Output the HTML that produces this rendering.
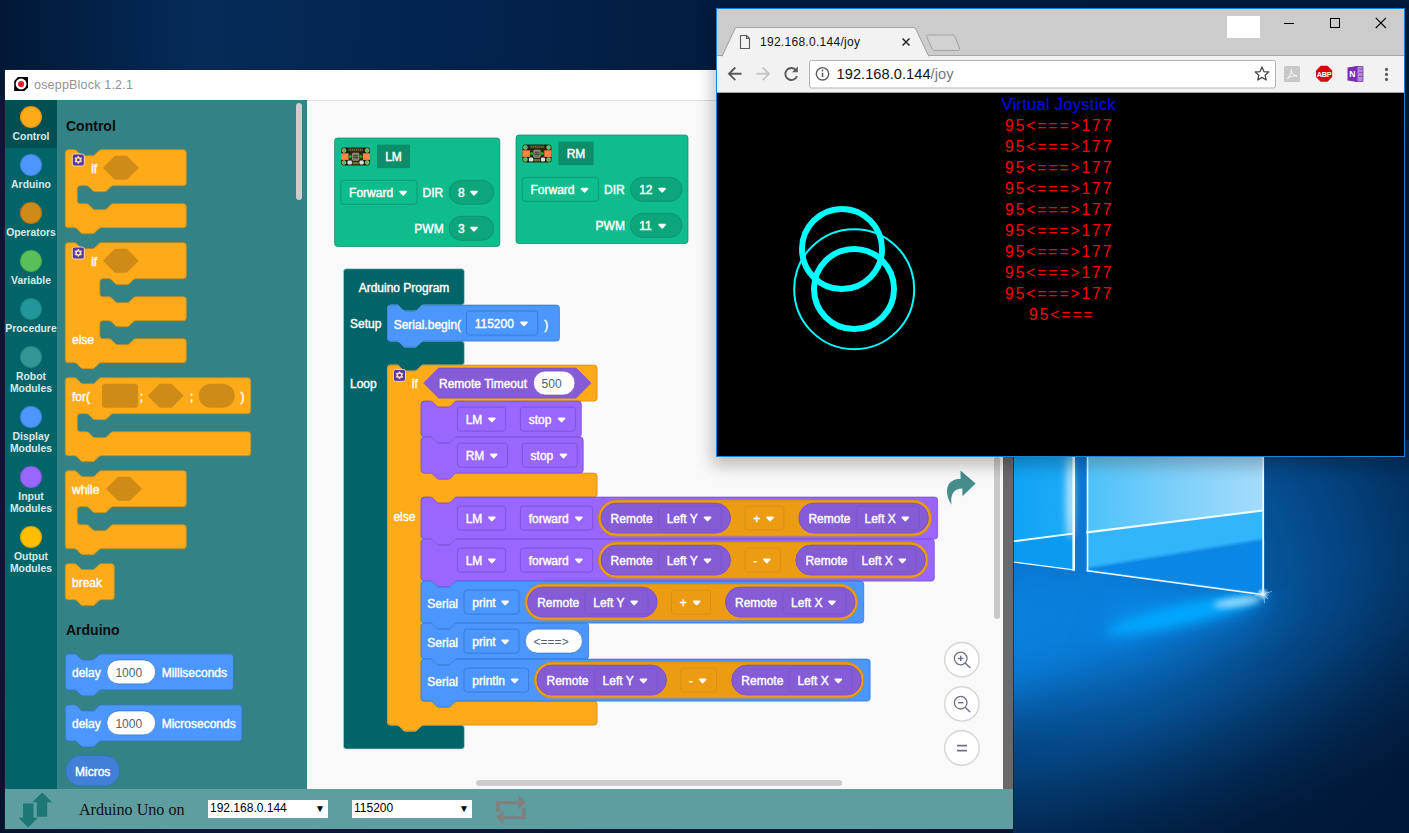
<!DOCTYPE html>
<html><head><meta charset="utf-8"><title>oseppBlock</title>
<style>
html,body{margin:0;padding:0}
body{width:1409px;height:833px;overflow:hidden;position:relative;background:#02224a;font-family:"Liberation Sans",sans-serif}
.abs{position:absolute}
#wall{position:absolute;left:0;top:0}
#osepp{position:absolute;left:5px;top:70px;width:1008px;height:759px;background:#f9f9f9;overflow:hidden;box-shadow:0 0 0 1px rgba(30,32,44,.75)}
#otitle{position:absolute;left:0;top:0;width:1008px;height:30px;background:#fff}
#otitle .t{position:absolute;left:29px;top:7.6px;font-size:12.5px;color:#929292;letter-spacing:0.2px;white-space:nowrap}
#side{position:absolute;left:0;top:30px;width:52px;height:689px;background:#006468}
#fly{position:absolute;left:52px;top:30px;width:250px;height:689px;background:#338285}
#ws{position:absolute;left:302px;top:30px;width:696px;height:689px;background:#f9f9f9;border-top:1px solid #dcdcdc;box-sizing:border-box}
#gray{position:absolute;left:998px;top:30px;width:10px;height:689px;background:#696969}
#bbar{position:absolute;left:0;top:719px;width:1008px;height:40px;background:#5f9ea0}
.cat{position:absolute;left:0;width:52px;text-align:center;color:#dde8e8;font-weight:bold;font-size:10.4px;line-height:12px;white-space:nowrap}
.cat i{display:block;width:20px;height:20px;border-radius:50%;margin:0 auto;border:1px solid rgba(0,0,0,.12)}
.sel{position:absolute;background:#fff;height:18px;font-size:12px;line-height:17px;color:#000;white-space:nowrap}
.sel span{position:absolute;left:2px;top:0}
.sel b{position:absolute;right:3px;top:0;font-weight:normal;font-size:10px}
#svgb{position:absolute;left:0;top:0}
</style></head>
<body>
<svg id="wall" width="1409" height="833" viewBox="0 0 1409 833">
<defs>
 <linearGradient id="wbase" x1="0" y1="0" x2="1" y2="0">
  <stop offset="0" stop-color="#021835"/><stop offset="0.04" stop-color="#021d42"/><stop offset="0.14" stop-color="#052b58"/><stop offset="0.3" stop-color="#032450"/><stop offset="0.5" stop-color="#021c41"/><stop offset="1" stop-color="#021a3c"/>
 </linearGradient>
 <linearGradient id="wbasev" x1="0" y1="0" x2="0" y2="1">
  <stop offset="0" stop-color="#010e26" stop-opacity="0"/><stop offset="0.8" stop-color="#010e26" stop-opacity="0.1"/><stop offset="1" stop-color="#010e26" stop-opacity="0.6"/>
 </linearGradient>
 <radialGradient id="wfloor" gradientUnits="userSpaceOnUse" cx="1120" cy="590" r="350">
  <stop offset="0" stop-color="#0a72ca"/><stop offset="0.35" stop-color="#075aa4"/><stop offset="0.65" stop-color="#044481"/><stop offset="1" stop-color="#022752"/>
 </radialGradient>
 <linearGradient id="wbot" gradientUnits="userSpaceOnUse" x1="1150" y1="630" x2="1230" y2="833">
  <stop offset="0" stop-color="#011634" stop-opacity="0"/><stop offset="0.2" stop-color="#011634" stop-opacity="0.04"/><stop offset="0.4" stop-color="#011634" stop-opacity="0.18"/><stop offset="0.6" stop-color="#011634" stop-opacity="0.42"/><stop offset="0.8" stop-color="#011634" stop-opacity="0.66"/><stop offset="1" stop-color="#011634" stop-opacity="0.85"/>
 </linearGradient>
 <linearGradient id="wdarkr" gradientUnits="userSpaceOnUse" x1="1080" y1="0" x2="1300" y2="0">
  <stop offset="0" stop-color="#032c5c" stop-opacity="0"/><stop offset="1" stop-color="#032c5c" stop-opacity="0.75"/>
 </linearGradient>
 <linearGradient id="wright" x1="0" y1="0" x2="1" y2="0.6">
  <stop offset="0" stop-color="#054e94"/><stop offset="0.4" stop-color="#04427f"/><stop offset="1" stop-color="#03305f"/>
 </linearGradient>
 <linearGradient id="wrightb" x1="0" y1="0" x2="0" y2="1">
  <stop offset="0" stop-color="#043d78" stop-opacity="0"/><stop offset="0.45" stop-color="#033468" stop-opacity="0.7"/><stop offset="1" stop-color="#021b40"/>
 </linearGradient>
 <linearGradient id="wpaneR" x1="0" y1="0" x2="1" y2="0">
  <stop offset="0" stop-color="#4cc2fa"/><stop offset="0.5" stop-color="#7ccffb"/><stop offset="1" stop-color="#a6dcfb"/>
 </linearGradient>
 <linearGradient id="wpaneRfade" x1="0" y1="0" x2="0" y2="1">
  <stop offset="0" stop-color="#cfeeff" stop-opacity="0.45"/><stop offset="0.5" stop-color="#8ad3fb" stop-opacity="0"/>
 </linearGradient>
 <linearGradient id="wpaneL" x1="0" y1="0" x2="1" y2="0">
  <stop offset="0" stop-color="#0fa3f5"/><stop offset="0.75" stop-color="#1aa9f6"/><stop offset="1" stop-color="#4dbdfa"/>
 </linearGradient>
 <radialGradient id="wbeam" cx="0.5" cy="0.5" r="0.5">
  <stop offset="0" stop-color="#00b0ff" stop-opacity="0.95"/><stop offset="0.5" stop-color="#00a0ff" stop-opacity="0.5"/><stop offset="1" stop-color="#0090ff" stop-opacity="0"/>
 </radialGradient>
 <radialGradient id="wflare" cx="0.5" cy="0.5" r="0.5">
  <stop offset="0" stop-color="#fff" stop-opacity="1"/><stop offset="0.25" stop-color="#d8f2ff" stop-opacity="0.8"/><stop offset="1" stop-color="#7fd0ff" stop-opacity="0"/>
 </radialGradient>
 <filter color-interpolation-filters="sRGB" id="wb05"><feGaussianBlur color-interpolation-filters="sRGB" stdDeviation="0.5"/></filter>
 <filter color-interpolation-filters="sRGB" id="wb07"><feGaussianBlur color-interpolation-filters="sRGB" stdDeviation="0.6"/></filter>
 <filter color-interpolation-filters="sRGB" id="wb1" x="-10%" y="-10%" width="120%" height="120%"><feGaussianBlur color-interpolation-filters="sRGB" stdDeviation="1.2"/></filter>
 <filter color-interpolation-filters="sRGB" id="wb6" filterUnits="userSpaceOnUse" x="900" y="450" width="520" height="400"><feGaussianBlur color-interpolation-filters="sRGB" stdDeviation="6"/></filter>
 <filter color-interpolation-filters="sRGB" id="wb3" filterUnits="userSpaceOnUse" x="900" y="400" width="520" height="450"><feGaussianBlur color-interpolation-filters="sRGB" stdDeviation="3"/></filter>
 <filter color-interpolation-filters="sRGB" id="wb25" filterUnits="userSpaceOnUse" x="850" y="400" width="600" height="500"><feGaussianBlur color-interpolation-filters="sRGB" stdDeviation="24"/></filter>
 <filter color-interpolation-filters="sRGB" id="wb12" filterUnits="userSpaceOnUse" x="900" y="450" width="520" height="400"><feGaussianBlur color-interpolation-filters="sRGB" stdDeviation="12"/></filter>
 <clipPath id="wbeamclip"><polygon points="1013,440 1264,440 1264,595 1409,560 1409,833 1013,833"/></clipPath>
 <clipPath id="wclip"><rect x="1013" y="440" width="396" height="393"/></clipPath>
</defs>
<rect width="1409" height="833" fill="url(#wbase)"/>
<rect width="1409" height="833" fill="url(#wbasev)"/>
<g clip-path="url(#wclip)">
 <rect x="1013" y="440" width="396" height="393" fill="url(#wfloor)"/>
 <rect x="1013" y="570" width="396" height="263" fill="url(#wbot)"/>
 <!-- beam of light on the floor -->
 <g clip-path="url(#wbeamclip)">
 <polygon points="960,540 1264,586 1264,604 960,715" fill="#0a7fdc" filter="url(#wb25)"/>
 <polygon points="1120,600 1262,592 1258,606 1090,640" fill="#0a8eee" opacity="0.6" filter="url(#wb12)"/>
 <ellipse cx="1185" cy="614" rx="80" ry="10" fill="#00aaff" transform="rotate(-13 1185 614)" filter="url(#wb6)"/>
 <ellipse cx="1237" cy="602" rx="24" ry="4.5" fill="#c8ecff" opacity="0.75" transform="rotate(-8 1237 602)" filter="url(#wb3)"/>
 </g>
 <!-- frame gap -->
 <rect x="1072" y="440" width="17" height="131" fill="#0a78d7"/>
 <!-- left pane -->
 <polygon points="1013,440 1073.7,440 1073.7,569.8 1013,562" fill="url(#wpaneL)"/>
 <polygon points="1013,541.4 1073.7,533.7 1073.7,569.8 1013,562" fill="#0a9bf0"/>
 <!-- right pane -->
 <polygon points="1087,440 1263.6,440 1263.6,594.8 1087,570.6" fill="url(#wpaneR)"/>
 <polygon points="1087,440 1263.6,440 1263.6,520 1087,520" fill="url(#wpaneRfade)"/>
 <polygon points="1087,532.3 1263.6,510.5 1263.6,540 1087,568" fill="#32b5fa"/>
 <polygon points="1087,568 1263.6,539 1263.6,594.8 1087,570.6" fill="#0a87e6" filter="url(#wb1)"/>
 <!-- bright lines -->
 <g stroke="#f0faff" fill="none" filter="url(#wb07)" stroke-linecap="round">
  <path d="M1087,532.3 L1263,510.5" stroke-width="2.2"/>
  <path d="M1013,541.4 L1073,533.7" stroke-width="1.8"/>
  <path d="M1087,570.8 L1263.6,594.8" stroke-width="1.6"/>
  <path d="M1013,562 L1073.7,569.8" stroke-width="1.2"/>
  <path d="M1073.7,440 V569.8" stroke-width="2.6"/>
  <path d="M1087.5,440 V570.6" stroke-width="1.6"/>
  <path d="M1263.2,440 V594.8" stroke-width="1.8"/>
 </g>
 <ellipse cx="1070.5" cy="498" rx="4" ry="42" fill="#fff" opacity="0.6" filter="url(#wb3)"/>
 <circle cx="1263" cy="594" r="7" fill="url(#wflare)"/>
 <path d="M1255,596 L1272,591.5 M1263,587 L1264.5,603 M1258.5,590 L1268,599" stroke="#cfeeff" stroke-width="0.8" opacity="0.7" filter="url(#wb05)"/>
</g>
</svg>
<div id="osepp">
 <div id="otitle">
  <svg class="abs" style="left:9px;top:7px" width="15" height="15" viewBox="0 0 15 15"><path d="M0.2 4 L4 0 H14 V10.5 L10.5 14 H0.2Z" fill="#000"/><circle cx="7.1" cy="7" r="5.4" fill="#fff"/><circle cx="7.1" cy="7" r="3.1" fill="#ec1c24"/></svg>
  <div class="t">oseppBlock 1.2.1</div>
 </div>
 <div id="side"><div class="abs" style="left:0;top:0;width:52px;height:48px;background:#005053"></div>
<div class="cat" style="top:6px"><i style="background:#FFAB19"></i><div style="margin-top:3px">Control</div></div>
<div class="cat" style="top:54px"><i style="background:#4C97FF"></i><div style="margin-top:3px">Arduino</div></div>
<div class="cat" style="top:102px"><i style="background:#CF8B17"></i><div style="margin-top:3px">Operators</div></div>
<div class="cat" style="top:150px"><i style="background:#59C059"></i><div style="margin-top:3px">Variable</div></div>
<div class="cat" style="top:198px"><i style="background:#21969B"></i><div style="margin-top:3px">Procedure</div></div>
<div class="cat" style="top:246px"><i style="background:#339696"></i><div style="margin-top:3px">Robot<br>Modules</div></div>
<div class="cat" style="top:306px"><i style="background:#4C97FF"></i><div style="margin-top:3px">Display<br>Modules</div></div>
<div class="cat" style="top:366px"><i style="background:#9966FF"></i><div style="margin-top:3px">Input<br>Modules</div></div>
<div class="cat" style="top:426px"><i style="background:#FFBF00"></i><div style="margin-top:3px">Output<br>Modules</div></div></div>
 <div id="fly"></div>
 <div id="ws"></div>
 <div id="gray"></div>
 <div id="bbar">
  <svg class="abs" style="left:12px;top:2px" width="40" height="38" viewBox="0 0 40 38"><path d="M25.2 1.4 L35.2 11.3 H30.2 V25.7 H19.8 V11.3 H15.3Z" fill="#1c7775"/><path d="M6 12.5 H16.5 V26.7 H20.8 L11.2 36.6 L1.6 26.7 H6Z" fill="#1c7775"/></svg>
  <div class="abs" style="left:74px;top:10.5px;font-family:'Liberation Serif',serif;font-size:16.1px;line-height:20px;color:#111;white-space:nowrap">Arduino Uno on</div>
  <div class="sel" style="left:203px;top:11px;width:120px"><span>192.168.0.144</span><b>&#9660;</b></div>
  <div class="sel" style="left:347px;top:11px;width:120px"><span>115200</span><b>&#9660;</b></div>
  <svg class="abs" style="left:490px;top:6px" width="32" height="31" viewBox="0 0 32 31"><path d="M1.1,16.9 V6.1 H23.5 V0 L30.8,7.4 L23.5,14.7 V9.4 H4.8 V16.9Z" fill="#808080"/><path d="M30.8,13.2 V24.2 H8.5 V29.7 L1.1,22.5 L8.5,15.2 V21.2 H27.2 V13.2Z" fill="#808080"/></svg>
 </div>
 <svg id="svgb" width="1008" height="759" viewBox="5 70 1008 759" font-family="'Liberation Sans',sans-serif" font-size="12" fill="#fff"><style>.t{stroke:#fff;stroke-width:.4px}</style><rect x="296" y="103" width="6" height="97" rx="3" fill="#cdcdcd"/>
<rect x="476" y="780" width="366" height="6" rx="3" fill="#cdcdcd"/>
<rect x="994" y="457" width="6" height="162" rx="3" fill="#c9c9c9"/>
<path d="M960.5,470.6 L975.6,483.5 L962.5,496.2 L962.3,488.6 C955,488.5 950,493 951.5,504.8 C945.5,496 945,484 953,480.5 C955.5,479.3 958,478.9 960.6,479Z" fill="#458c8c"/>
<circle cx="961.9" cy="659.7" r="17.2" fill="#fff" stroke="#d6d6d6" stroke-width="1.4"/>
<circle cx="960.7" cy="658.5" r="6.3" fill="none" stroke="#6b7189" stroke-width="1.3"/>
<path d="M965.4,663.2 L969.8,667.6" stroke="#6b7189" stroke-width="1.4" stroke-linecap="round"/>
<path d="M958,658.5 H963.4" stroke="#6b7189" stroke-width="1.4"/>
<path d="M960.7,655.8000000000001 V661.2" stroke="#6b7189" stroke-width="1.4"/>
<circle cx="961.9" cy="703.9" r="17.2" fill="#fff" stroke="#d6d6d6" stroke-width="1.4"/>
<circle cx="960.7" cy="702.6999999999999" r="6.3" fill="none" stroke="#6b7189" stroke-width="1.3"/>
<path d="M965.4,707.4 L969.8,711.8" stroke="#6b7189" stroke-width="1.4" stroke-linecap="round"/>
<path d="M958,702.6999999999999 H963.4" stroke="#6b7189" stroke-width="1.4"/>
<circle cx="961.9" cy="748" r="17.2" fill="#fff" stroke="#d6d6d6" stroke-width="1.4"/>
<path d="M957,745.7 H967 M957,750.7 H967" stroke="#6b7189" stroke-width="1.7"/>
<path d="M65.3,152.7a3.0,3.0 0 0 1 3.0,-3.0H74.3c1.5,0 2.25,.75 3,1.5l3,3c.75,.75 1.5,1.5 3,1.5h9c1.5,0 2.25,-.75 3,-1.5l3,-3c.75,-.75 1.5,-1.5 3,-1.5H183.3a3.0,3.0 0 0 1 3.0,3.0V182.7a3.0,3.0 0 0 1 -3.0,3.0H113.3c-1.5,0 -2.25,.75 -3,1.5l-3,3c-.75,.75 -1.5,1.5 -3,1.5h-9c-1.5,0 -2.25,-.75 -3,-1.5l-3,-3c-.75,-.75 -1.5,-1.5 -3,-1.5H80.3a3.0,3.0 0 0 0 -3.0,3.0V200.7a3.0,3.0 0 0 0 3.0,3.0H86.3c1.5,0 2.25,.75 3,1.5l3,3c.75,.75 1.5,1.5 3,1.5h9c1.5,0 2.25,-.75 3,-1.5l3,-3c.75,-.75 1.5,-1.5 3,-1.5H183.3a3.0,3.0 0 0 1 3.0,3.0V224.7a3.0,3.0 0 0 1 -3.0,3.0H101.3c-1.5,0 -2.25,.75 -3,1.5l-3,3c-.75,.75 -1.5,1.5 -3,1.5h-9c-1.5,0 -2.25,-.75 -3,-1.5l-3,-3c-.75,-.75 -1.5,-1.5 -3,-1.5H68.3a3.0,3.0 0 0 1 -3.0,-3.0z" fill="#FFAB19" stroke="#CF8B17" stroke-width="0.75"/>
<g transform="translate(72.3,154)"><rect x="0" y="0" width="12" height="12" rx="2.2" fill="#5a37a8" stroke="#fbe2ad" stroke-width="0.9"/><path d="M6.00,2.00 L7.28,3.69 L9.38,3.95 L8.55,5.90 L9.38,7.85 L7.28,8.11 L6.00,9.80 L4.73,8.11 L2.62,7.85 L3.45,5.90 L2.62,3.95 L4.72,3.69Z" fill="#fbe7a6" stroke="#fbe7a6" stroke-width="0.5" stroke-linejoin="round"/><circle cx="6" cy="5.9" r="1.45" fill="#5a37a8"/></g>
<text x="91.2" y="172.85" class="t">if</text>
<path d="M114.8,155.7H126.8l12,12l-12,12H114.8l-12,-12z" fill="#CF8B17"/>
<path d="M65.3,245.7a3.0,3.0 0 0 1 3.0,-3.0H74.3c1.5,0 2.25,.75 3,1.5l3,3c.75,.75 1.5,1.5 3,1.5h9c1.5,0 2.25,-.75 3,-1.5l3,-3c.75,-.75 1.5,-1.5 3,-1.5H183.3a3.0,3.0 0 0 1 3.0,3.0V275.7a3.0,3.0 0 0 1 -3.0,3.0H135.9c-1.5,0 -2.25,.75 -3,1.5l-3,3c-.75,.75 -1.5,1.5 -3,1.5h-9c-1.5,0 -2.25,-.75 -3,-1.5l-3,-3c-.75,-.75 -1.5,-1.5 -3,-1.5H102.9a3.0,3.0 0 0 0 -3.0,3.0V293.7a3.0,3.0 0 0 0 3.0,3.0H108.9c1.5,0 2.25,.75 3,1.5l3,3c.75,.75 1.5,1.5 3,1.5h9c1.5,0 2.25,-.75 3,-1.5l3,-3c.75,-.75 1.5,-1.5 3,-1.5H183.3a3.0,3.0 0 0 1 3.0,3.0V317.7a3.0,3.0 0 0 1 -3.0,3.0H135.9c-1.5,0 -2.25,.75 -3,1.5l-3,3c-.75,.75 -1.5,1.5 -3,1.5h-9c-1.5,0 -2.25,-.75 -3,-1.5l-3,-3c-.75,-.75 -1.5,-1.5 -3,-1.5H102.9a3.0,3.0 0 0 0 -3.0,3.0V335.7a3.0,3.0 0 0 0 3.0,3.0H108.9c1.5,0 2.25,.75 3,1.5l3,3c.75,.75 1.5,1.5 3,1.5h9c1.5,0 2.25,-.75 3,-1.5l3,-3c.75,-.75 1.5,-1.5 3,-1.5H183.3a3.0,3.0 0 0 1 3.0,3.0V359.7a3.0,3.0 0 0 1 -3.0,3.0H101.3c-1.5,0 -2.25,.75 -3,1.5l-3,3c-.75,.75 -1.5,1.5 -3,1.5h-9c-1.5,0 -2.25,-.75 -3,-1.5l-3,-3c-.75,-.75 -1.5,-1.5 -3,-1.5H68.3a3.0,3.0 0 0 1 -3.0,-3.0z" fill="#FFAB19" stroke="#CF8B17" stroke-width="0.75"/>
<g transform="translate(72.3,247)"><rect x="0" y="0" width="12" height="12" rx="2.2" fill="#5a37a8" stroke="#fbe2ad" stroke-width="0.9"/><path d="M6.00,2.00 L7.28,3.69 L9.38,3.95 L8.55,5.90 L9.38,7.85 L7.28,8.11 L6.00,9.80 L4.73,8.11 L2.62,7.85 L3.45,5.90 L2.62,3.95 L4.72,3.69Z" fill="#fbe7a6" stroke="#fbe7a6" stroke-width="0.5" stroke-linejoin="round"/><circle cx="6" cy="5.9" r="1.45" fill="#5a37a8"/></g>
<text x="91.2" y="265.85" class="t">if</text>
<path d="M114.8,248.7H126.8l12,12l-12,12H114.8l-12,-12z" fill="#CF8B17"/>
<text x="72" y="344.1" class="t">else</text>
<path d="M65.3,380.7a3.0,3.0 0 0 1 3.0,-3.0H74.3c1.5,0 2.25,.75 3,1.5l3,3c.75,.75 1.5,1.5 3,1.5h9c1.5,0 2.25,-.75 3,-1.5l3,-3c.75,-.75 1.5,-1.5 3,-1.5H247.7a3.0,3.0 0 0 1 3.0,3.0V410.7a3.0,3.0 0 0 1 -3.0,3.0H113.3c-1.5,0 -2.25,.75 -3,1.5l-3,3c-.75,.75 -1.5,1.5 -3,1.5h-9c-1.5,0 -2.25,-.75 -3,-1.5l-3,-3c-.75,-.75 -1.5,-1.5 -3,-1.5H80.3a3.0,3.0 0 0 0 -3.0,3.0V428.7a3.0,3.0 0 0 0 3.0,3.0H86.3c1.5,0 2.25,.75 3,1.5l3,3c.75,.75 1.5,1.5 3,1.5h9c1.5,0 2.25,-.75 3,-1.5l3,-3c.75,-.75 1.5,-1.5 3,-1.5H247.7a3.0,3.0 0 0 1 3.0,3.0V452.7a3.0,3.0 0 0 1 -3.0,3.0H101.3c-1.5,0 -2.25,.75 -3,1.5l-3,3c-.75,.75 -1.5,1.5 -3,1.5h-9c-1.5,0 -2.25,-.75 -3,-1.5l-3,-3c-.75,-.75 -1.5,-1.5 -3,-1.5H68.3a3.0,3.0 0 0 1 -3.0,-3.0z" fill="#FFAB19" stroke="#CF8B17" stroke-width="0.75"/>
<text x="72" y="400.85" class="t">for(</text>
<rect x="102" y="383.7" width="36" height="24" rx="3" fill="#CF8B17"/>
<text x="139.8" y="400.85" class="t">;</text>
<path d="M159.6,383.7H171.6l12,12l-12,12H159.6l-12,-12z" fill="#CF8B17"/>
<text x="190" y="400.85" class="t">;</text>
<path d="M210.7,383.7H222.7a12,12 0 0 1 0,24H210.7a12,12 0 0 1 0,-24z" fill="#CF8B17"/>
<text x="240.6" y="400.85" class="t">)</text>
<path d="M65.3,473.7a3.0,3.0 0 0 1 3.0,-3.0H74.3c1.5,0 2.25,.75 3,1.5l3,3c.75,.75 1.5,1.5 3,1.5h9c1.5,0 2.25,-.75 3,-1.5l3,-3c.75,-.75 1.5,-1.5 3,-1.5H183.3a3.0,3.0 0 0 1 3.0,3.0V503.7a3.0,3.0 0 0 1 -3.0,3.0H113.3c-1.5,0 -2.25,.75 -3,1.5l-3,3c-.75,.75 -1.5,1.5 -3,1.5h-9c-1.5,0 -2.25,-.75 -3,-1.5l-3,-3c-.75,-.75 -1.5,-1.5 -3,-1.5H80.3a3.0,3.0 0 0 0 -3.0,3.0V521.7a3.0,3.0 0 0 0 3.0,3.0H86.3c1.5,0 2.25,.75 3,1.5l3,3c.75,.75 1.5,1.5 3,1.5h9c1.5,0 2.25,-.75 3,-1.5l3,-3c.75,-.75 1.5,-1.5 3,-1.5H183.3a3.0,3.0 0 0 1 3.0,3.0V545.7a3.0,3.0 0 0 1 -3.0,3.0H101.3c-1.5,0 -2.25,.75 -3,1.5l-3,3c-.75,.75 -1.5,1.5 -3,1.5h-9c-1.5,0 -2.25,-.75 -3,-1.5l-3,-3c-.75,-.75 -1.5,-1.5 -3,-1.5H68.3a3.0,3.0 0 0 1 -3.0,-3.0z" fill="#FFAB19" stroke="#CF8B17" stroke-width="0.75"/>
<text x="72" y="493.85" class="t">while</text>
<path d="M118,476.7H130l12,12l-12,12H118l-12,-12z" fill="#CF8B17"/>
<path d="M65.3,566.7a3.0,3.0 0 0 1 3.0,-3.0H74.3c1.5,0 2.25,.75 3,1.5l3,3c.75,.75 1.5,1.5 3,1.5h9c1.5,0 2.25,-.75 3,-1.5l3,-3c.75,-.75 1.5,-1.5 3,-1.5H111.3a3.0,3.0 0 0 1 3.0,3.0V596.7a3.0,3.0 0 0 1 -3.0,3.0H101.3c-1.5,0 -2.25,.75 -3,1.5l-3,3c-.75,.75 -1.5,1.5 -3,1.5h-9c-1.5,0 -2.25,-.75 -3,-1.5l-3,-3c-.75,-.75 -1.5,-1.5 -3,-1.5H68.3a3.0,3.0 0 0 1 -3.0,-3.0z" fill="#FFAB19" stroke="#CF8B17" stroke-width="0.75"/>
<text x="72" y="586.85" class="t">break</text>
<text x="66" y="131.31" font-weight="bold" font-size="14" fill="#0e0e0e">Control</text>
<text x="66" y="634.91" font-weight="bold" font-size="14" fill="#0e0e0e">Arduino</text>
<path d="M65.3,656.9a3.0,3.0 0 0 1 3.0,-3.0H74.3c1.5,0 2.25,.75 3,1.5l3,3c.75,.75 1.5,1.5 3,1.5h9c1.5,0 2.25,-.75 3,-1.5l3,-3c.75,-.75 1.5,-1.5 3,-1.5H230.3a3.0,3.0 0 0 1 3.0,3.0V686.9a3.0,3.0 0 0 1 -3.0,3.0H101.3c-1.5,0 -2.25,.75 -3,1.5l-3,3c-.75,.75 -1.5,1.5 -3,1.5h-9c-1.5,0 -2.25,-.75 -3,-1.5l-3,-3c-.75,-.75 -1.5,-1.5 -3,-1.5H68.3a3.0,3.0 0 0 1 -3.0,-3.0z" fill="#4C97FF" stroke="#3373CC" stroke-width="0.75"/>
<text x="72" y="677.05" class="t">delay</text>
<path d="M118.8,659.9H143.6a12,12 0 0 1 0,24H118.8a12,12 0 0 1 0,-24z" fill="#fff" stroke="#3373CC" stroke-width="0.75"/>
<text x="115.4" y="676.8" fill="#575e75">1000</text>
<text x="161.7" y="677.05" class="t">Milliseconds</text>
<path d="M65.3,707.9a3.0,3.0 0 0 1 3.0,-3.0H74.3c1.5,0 2.25,.75 3,1.5l3,3c.75,.75 1.5,1.5 3,1.5h9c1.5,0 2.25,-.75 3,-1.5l3,-3c.75,-.75 1.5,-1.5 3,-1.5H239a3.0,3.0 0 0 1 3.0,3.0V737.9a3.0,3.0 0 0 1 -3.0,3.0H101.3c-1.5,0 -2.25,.75 -3,1.5l-3,3c-.75,.75 -1.5,1.5 -3,1.5h-9c-1.5,0 -2.25,-.75 -3,-1.5l-3,-3c-.75,-.75 -1.5,-1.5 -3,-1.5H68.3a3.0,3.0 0 0 1 -3.0,-3.0z" fill="#4C97FF" stroke="#3373CC" stroke-width="0.75"/>
<text x="72" y="728.05" class="t">delay</text>
<path d="M118.8,710.9H143.6a12,12 0 0 1 0,24H118.8a12,12 0 0 1 0,-24z" fill="#fff" stroke="#3373CC" stroke-width="0.75"/>
<text x="115.4" y="727.8" fill="#575e75">1000</text>
<text x="161.7" y="728.05" class="t">Microseconds</text>
<path d="M80.8,755.7H104.6a15,15 0 0 1 0,30H80.8a15,15 0 0 1 0,-30z" fill="#4280D7" stroke="#3373CC" stroke-width="0.75"/>
<text x="75" y="775.5" class="t">Micros</text>
<rect x="334.6" y="138" width="165.2" height="108.5" rx="3" fill="#0FBD8C" stroke="#0B8E69" stroke-width="0.75"/>
<g transform="translate(340.9,147.2)"><rect x="0.2" y="0.3" width="29" height="18" rx="3" fill="#1c1c12"/><rect x="0.2" y="6.1" width="29" height="6.6" fill="#ff8540"/><rect x="7.6" y="5.6" width="14.4" height="7.8" fill="#2a2a1e"/><rect x="7.5" y="1.4" width="14.5" height="2.6" fill="#8f7a3c" opacity="0.85"/><path d="M8.5,1.4 V4 M10.5,1.4 V4 M12.5,1.4 V4 M14.5,1.4 V4 M16.5,1.4 V4 M18.5,1.4 V4 M20.5,1.4 V4" stroke="#1c1c12" stroke-width="0.7"/><rect x="11.5" y="5.9" width="6.4" height="7.2" rx="0.6" fill="#74746c" stroke="#c9b878" stroke-width="0.6"/><path d="M12.4,8.6 H17 M12.4,10.4 H17" stroke="#33332c" stroke-width="0.8"/><circle cx="9.3" cy="9.3" r="1.55" fill="#10b414"/><circle cx="20" cy="9.3" r="1.55" fill="#10b414"/><rect x="6.6" y="13.2" width="4.4" height="4.2" rx="1.4" fill="#dcdcdc"/><rect x="18.6" y="13.2" width="4.2" height="4.2" rx="1.4" fill="#dcdcdc"/><rect x="11.6" y="14.6" width="6.2" height="2.6" fill="#8f7a3c" opacity="0.8"/><circle cx="3.1" cy="3.3" r="1.9" fill="#22c486" stroke="#d2b63c" stroke-width="0.8"/><circle cx="26.3" cy="3.3" r="1.9" fill="#22c486" stroke="#d2b63c" stroke-width="0.8"/><circle cx="3.1" cy="15.3" r="1.9" fill="#22c486" stroke="#d2b63c" stroke-width="0.8"/><circle cx="26.3" cy="15.3" r="1.9" fill="#22c486" stroke="#d2b63c" stroke-width="0.8"/></g>
<rect x="377" y="144.6" width="33" height="23.5" fill="#0B8E69"/>
<text x="393.5" y="160.9" class="t" text-anchor="middle">LM</text>
<rect x="340.8" y="180.3" width="76.2" height="24" rx="3" fill="#0FBD8C" stroke="#0B8E69" stroke-width="0.75"/>
<text x="349.1" y="197.3" class="t">Forward</text>
<path transform="translate(399.3,190.8) scale(.92)" d="M1,0 H7.4 C8.3,0 8.7,.9 8.1,1.6 L5,4.9 C4.6,5.4 3.8,5.4 3.4,4.9 L.3,1.6 C-.3,.9 .1,0 1,0z" fill="#fff"/>
<text x="422.6" y="196.9" class="t">DIR</text>
<path d="M461.2,180.3H481.8a12,12 0 0 1 0,24H461.2a12,12 0 0 1 0,-24z" fill="#0DA57A" stroke="#0B8E69" stroke-width="0.75"/>
<text x="458" y="197.3" class="t">8</text>
<path transform="translate(470.1,190.8) scale(.92)" d="M1,0 H7.4 C8.3,0 8.7,.9 8.1,1.6 L5,4.9 C4.6,5.4 3.8,5.4 3.4,4.9 L.3,1.6 C-.3,.9 .1,0 1,0z" fill="#fff"/>
<text x="443.7" y="232.9" class="t" text-anchor="end">PWM</text>
<path d="M461.2,216.3H481.8a12,12 0 0 1 0,24H461.2a12,12 0 0 1 0,-24z" fill="#0DA57A" stroke="#0B8E69" stroke-width="0.75"/>
<text x="458" y="233.3" class="t">3</text>
<path transform="translate(470.1,226.8) scale(.92)" d="M1,0 H7.4 C8.3,0 8.7,.9 8.1,1.6 L5,4.9 C4.6,5.4 3.8,5.4 3.4,4.9 L.3,1.6 C-.3,.9 .1,0 1,0z" fill="#fff"/>
<rect x="516" y="135" width="172" height="108.5" rx="3" fill="#0FBD8C" stroke="#0B8E69" stroke-width="0.75"/>
<g transform="translate(522.3,144.2)"><rect x="0.2" y="0.3" width="29" height="18" rx="3" fill="#1c1c12"/><rect x="0.2" y="6.1" width="29" height="6.6" fill="#ff8540"/><rect x="7.6" y="5.6" width="14.4" height="7.8" fill="#2a2a1e"/><rect x="7.5" y="1.4" width="14.5" height="2.6" fill="#8f7a3c" opacity="0.85"/><path d="M8.5,1.4 V4 M10.5,1.4 V4 M12.5,1.4 V4 M14.5,1.4 V4 M16.5,1.4 V4 M18.5,1.4 V4 M20.5,1.4 V4" stroke="#1c1c12" stroke-width="0.7"/><rect x="11.5" y="5.9" width="6.4" height="7.2" rx="0.6" fill="#74746c" stroke="#c9b878" stroke-width="0.6"/><path d="M12.4,8.6 H17 M12.4,10.4 H17" stroke="#33332c" stroke-width="0.8"/><circle cx="9.3" cy="9.3" r="1.55" fill="#10b414"/><circle cx="20" cy="9.3" r="1.55" fill="#10b414"/><rect x="6.6" y="13.2" width="4.4" height="4.2" rx="1.4" fill="#dcdcdc"/><rect x="18.6" y="13.2" width="4.2" height="4.2" rx="1.4" fill="#dcdcdc"/><rect x="11.6" y="14.6" width="6.2" height="2.6" fill="#8f7a3c" opacity="0.8"/><circle cx="3.1" cy="3.3" r="1.9" fill="#22c486" stroke="#d2b63c" stroke-width="0.8"/><circle cx="26.3" cy="3.3" r="1.9" fill="#22c486" stroke="#d2b63c" stroke-width="0.8"/><circle cx="3.1" cy="15.3" r="1.9" fill="#22c486" stroke="#d2b63c" stroke-width="0.8"/><circle cx="26.3" cy="15.3" r="1.9" fill="#22c486" stroke="#d2b63c" stroke-width="0.8"/></g>
<rect x="558.4" y="141.6" width="35.2" height="23.5" fill="#0B8E69"/>
<text x="576" y="157.9" class="t" text-anchor="middle">RM</text>
<rect x="522.2" y="177.3" width="76.2" height="24" rx="3" fill="#0FBD8C" stroke="#0B8E69" stroke-width="0.75"/>
<text x="530.5" y="194.3" class="t">Forward</text>
<path transform="translate(580.7,187.8) scale(.92)" d="M1,0 H7.4 C8.3,0 8.7,.9 8.1,1.6 L5,4.9 C4.6,5.4 3.8,5.4 3.4,4.9 L.3,1.6 C-.3,.9 .1,0 1,0z" fill="#fff"/>
<text x="604" y="193.9" class="t">DIR</text>
<path d="M642.4,177.3H670a12,12 0 0 1 0,24H642.4a12,12 0 0 1 0,-24z" fill="#0DA57A" stroke="#0B8E69" stroke-width="0.75"/>
<text x="639.2" y="194.3" class="t">12</text>
<path transform="translate(658.3,187.8) scale(.92)" d="M1,0 H7.4 C8.3,0 8.7,.9 8.1,1.6 L5,4.9 C4.6,5.4 3.8,5.4 3.4,4.9 L.3,1.6 C-.3,.9 .1,0 1,0z" fill="#fff"/>
<text x="624.9" y="229.9" class="t" text-anchor="end">PWM</text>
<path d="M642.4,213.3H670a12,12 0 0 1 0,24H642.4a12,12 0 0 1 0,-24z" fill="#0DA57A" stroke="#0B8E69" stroke-width="0.75"/>
<text x="639.2" y="230.3" class="t">11</text>
<path transform="translate(658.3,223.8) scale(.92)" d="M1,0 H7.4 C8.3,0 8.7,.9 8.1,1.6 L5,4.9 C4.6,5.4 3.8,5.4 3.4,4.9 L.3,1.6 C-.3,.9 .1,0 1,0z" fill="#fff"/>
<path d="M343.4,271.7a3.0,3.0 0 0 1 3.0,-3.0H461.4a3.0,3.0 0 0 1 3.0,3.0V302.1a3.0,3.0 0 0 1 -3.0,3.0H423.6c-1.5,0 -2.25,.75 -3,1.5l-3,3c-.75,.75 -1.5,1.5 -3,1.5h-9c-1.5,0 -2.25,-.75 -3,-1.5l-3,-3c-.75,-.75 -1.5,-1.5 -3,-1.5H390.6a3.0,3.0 0 0 0 -3.0,3.0V338.1a3.0,3.0 0 0 0 3.0,3.0H396.6c1.5,0 2.25,.75 3,1.5l3,3c.75,.75 1.5,1.5 3,1.5h9c1.5,0 2.25,-.75 3,-1.5l3,-3c.75,-.75 1.5,-1.5 3,-1.5H461.4a3.0,3.0 0 0 1 3.0,3.0V362.1a3.0,3.0 0 0 1 -3.0,3.0H423.6c-1.5,0 -2.25,.75 -3,1.5l-3,3c-.75,.75 -1.5,1.5 -3,1.5h-9c-1.5,0 -2.25,-.75 -3,-1.5l-3,-3c-.75,-.75 -1.5,-1.5 -3,-1.5H390.6a3.0,3.0 0 0 0 -3.0,3.0V722.1a3.0,3.0 0 0 0 3.0,3.0H396.6c1.5,0 2.25,.75 3,1.5l3,3c.75,.75 1.5,1.5 3,1.5h9c1.5,0 2.25,-.75 3,-1.5l3,-3c.75,-.75 1.5,-1.5 3,-1.5H461.4a3.0,3.0 0 0 1 3.0,3.0V746.1a3.0,3.0 0 0 1 -3.0,3.0H346.4a3.0,3.0 0 0 1 -3.0,-3.0z" fill="#006468" stroke="#b9dcdc" stroke-width="0.75"/>
<text x="404" y="291.5" class="t" text-anchor="middle">Arduino Program</text>
<text x="350" y="328.3" class="t">Setup</text>
<text x="350" y="388.3" class="t">Loop</text>
<path d="M387.6,308.1a3.0,3.0 0 0 1 3.0,-3.0H396.6c1.5,0 2.25,.75 3,1.5l3,3c.75,.75 1.5,1.5 3,1.5h9c1.5,0 2.25,-.75 3,-1.5l3,-3c.75,-.75 1.5,-1.5 3,-1.5H556.4a3.0,3.0 0 0 1 3.0,3.0V338.1a3.0,3.0 0 0 1 -3.0,3.0H423.6c-1.5,0 -2.25,.75 -3,1.5l-3,3c-.75,.75 -1.5,1.5 -3,1.5h-9c-1.5,0 -2.25,-.75 -3,-1.5l-3,-3c-.75,-.75 -1.5,-1.5 -3,-1.5H390.6a3.0,3.0 0 0 1 -3.0,-3.0z" fill="#4C97FF" stroke="#3373CC" stroke-width="0.75"/>
<text x="393.7" y="328.7" class="t">Serial.begin(</text>
<rect x="466.4" y="311.1" width="71.4" height="24" rx="3" fill="#4C97FF" stroke="#3373CC" stroke-width="0.75"/>
<text x="474.7" y="328.1" class="t">115200</text>
<path transform="translate(520.1,321.6) scale(.92)" d="M1,0 H7.4 C8.3,0 8.7,.9 8.1,1.6 L5,4.9 C4.6,5.4 3.8,5.4 3.4,4.9 L.3,1.6 C-.3,.9 .1,0 1,0z" fill="#fff"/>
<text x="544.2" y="328.7" class="t">)</text>
<path d="M387.6,368.1a3.0,3.0 0 0 1 3.0,-3.0H396.6c1.5,0 2.25,.75 3,1.5l3,3c.75,.75 1.5,1.5 3,1.5h9c1.5,0 2.25,-.75 3,-1.5l3,-3c.75,-.75 1.5,-1.5 3,-1.5H594.1a3.0,3.0 0 0 1 3.0,3.0V398.1a3.0,3.0 0 0 1 -3.0,3.0H457.1c-1.5,0 -2.25,.75 -3,1.5l-3,3c-.75,.75 -1.5,1.5 -3,1.5h-9c-1.5,0 -2.25,-.75 -3,-1.5l-3,-3c-.75,-.75 -1.5,-1.5 -3,-1.5H424.1a3.0,3.0 0 0 0 -3.0,3.0V470.1a3.0,3.0 0 0 0 3.0,3.0H430.1c1.5,0 2.25,.75 3,1.5l3,3c.75,.75 1.5,1.5 3,1.5h9c1.5,0 2.25,-.75 3,-1.5l3,-3c.75,-.75 1.5,-1.5 3,-1.5H594.1a3.0,3.0 0 0 1 3.0,3.0V494.1a3.0,3.0 0 0 1 -3.0,3.0H457.1c-1.5,0 -2.25,.75 -3,1.5l-3,3c-.75,.75 -1.5,1.5 -3,1.5h-9c-1.5,0 -2.25,-.75 -3,-1.5l-3,-3c-.75,-.75 -1.5,-1.5 -3,-1.5H424.1a3.0,3.0 0 0 0 -3.0,3.0V698.1a3.0,3.0 0 0 0 3.0,3.0H430.1c1.5,0 2.25,.75 3,1.5l3,3c.75,.75 1.5,1.5 3,1.5h9c1.5,0 2.25,-.75 3,-1.5l3,-3c.75,-.75 1.5,-1.5 3,-1.5H594.1a3.0,3.0 0 0 1 3.0,3.0V722.1a3.0,3.0 0 0 1 -3.0,3.0H423.6c-1.5,0 -2.25,.75 -3,1.5l-3,3c-.75,.75 -1.5,1.5 -3,1.5h-9c-1.5,0 -2.25,-.75 -3,-1.5l-3,-3c-.75,-.75 -1.5,-1.5 -3,-1.5H390.6a3.0,3.0 0 0 1 -3.0,-3.0z" fill="#FFAB19" stroke="#CF8B17" stroke-width="0.75"/>
<g transform="translate(393.5,369.4)"><rect x="0" y="0" width="12" height="12" rx="2.2" fill="#5a37a8" stroke="#fbe2ad" stroke-width="0.9"/><path d="M6.00,2.00 L7.28,3.69 L9.38,3.95 L8.55,5.90 L9.38,7.85 L7.28,8.11 L6.00,9.80 L4.73,8.11 L2.62,7.85 L3.45,5.90 L2.62,3.95 L4.72,3.69Z" fill="#fbe7a6" stroke="#fbe7a6" stroke-width="0.5" stroke-linejoin="round"/><circle cx="6" cy="5.9" r="1.45" fill="#5a37a8"/></g>
<text x="411.8" y="388.1" class="t">if</text>
<path d="M438.7,368.1H576l15,15l-15,15H438.7l-15,-15z" fill="#855CD6" stroke="#774DCB" stroke-width="0.75"/>
<text x="439" y="387.7" class="t">Remote Timeout</text>
<path d="M545.4,371.1H563a12,12 0 0 1 0,24H545.4a12,12 0 0 1 0,-24z" fill="#fff" stroke="#774DCB" stroke-width="0.75"/>
<text x="541.6" y="387.8" fill="#575e75">500</text>
<text x="393.4" y="520.5" class="t">else</text>
<path d="M421.1,404.1a3.0,3.0 0 0 1 3.0,-3.0H430.1c1.5,0 2.25,.75 3,1.5l3,3c.75,.75 1.5,1.5 3,1.5h9c1.5,0 2.25,-.75 3,-1.5l3,-3c.75,-.75 1.5,-1.5 3,-1.5H578.3a3.0,3.0 0 0 1 3.0,3.0V434.1a3.0,3.0 0 0 1 -3.0,3.0H457.1c-1.5,0 -2.25,.75 -3,1.5l-3,3c-.75,.75 -1.5,1.5 -3,1.5h-9c-1.5,0 -2.25,-.75 -3,-1.5l-3,-3c-.75,-.75 -1.5,-1.5 -3,-1.5H424.1a3.0,3.0 0 0 1 -3.0,-3.0z" fill="#9966FF" stroke="#774DCB" stroke-width="0.75"/>
<rect x="457.4" y="407.1" width="48.3" height="24" rx="3" fill="#9966FF" stroke="#774DCB" stroke-width="0.75"/>
<text x="465.7" y="424.1" class="t">LM</text>
<path transform="translate(488,417.6) scale(.92)" d="M1,0 H7.4 C8.3,0 8.7,.9 8.1,1.6 L5,4.9 C4.6,5.4 3.8,5.4 3.4,4.9 L.3,1.6 C-.3,.9 .1,0 1,0z" fill="#fff"/>
<rect x="520.4" y="407.1" width="55" height="24" rx="3" fill="#9966FF" stroke="#774DCB" stroke-width="0.75"/>
<text x="528.7" y="424.1" class="t">stop</text>
<path transform="translate(557.7,417.6) scale(.92)" d="M1,0 H7.4 C8.3,0 8.7,.9 8.1,1.6 L5,4.9 C4.6,5.4 3.8,5.4 3.4,4.9 L.3,1.6 C-.3,.9 .1,0 1,0z" fill="#fff"/>
<path d="M421.1,440.1a3.0,3.0 0 0 1 3.0,-3.0H430.1c1.5,0 2.25,.75 3,1.5l3,3c.75,.75 1.5,1.5 3,1.5h9c1.5,0 2.25,-.75 3,-1.5l3,-3c.75,-.75 1.5,-1.5 3,-1.5H580.2a3.0,3.0 0 0 1 3.0,3.0V470.1a3.0,3.0 0 0 1 -3.0,3.0H457.1c-1.5,0 -2.25,.75 -3,1.5l-3,3c-.75,.75 -1.5,1.5 -3,1.5h-9c-1.5,0 -2.25,-.75 -3,-1.5l-3,-3c-.75,-.75 -1.5,-1.5 -3,-1.5H424.1a3.0,3.0 0 0 1 -3.0,-3.0z" fill="#9966FF" stroke="#774DCB" stroke-width="0.75"/>
<rect x="457.4" y="443.1" width="50.2" height="24" rx="3" fill="#9966FF" stroke="#774DCB" stroke-width="0.75"/>
<text x="465.7" y="460.1" class="t">RM</text>
<path transform="translate(489.9,453.6) scale(.92)" d="M1,0 H7.4 C8.3,0 8.7,.9 8.1,1.6 L5,4.9 C4.6,5.4 3.8,5.4 3.4,4.9 L.3,1.6 C-.3,.9 .1,0 1,0z" fill="#fff"/>
<rect x="522.3" y="443.1" width="55" height="24" rx="3" fill="#9966FF" stroke="#774DCB" stroke-width="0.75"/>
<text x="530.6" y="460.1" class="t">stop</text>
<path transform="translate(559.6,453.6) scale(.92)" d="M1,0 H7.4 C8.3,0 8.7,.9 8.1,1.6 L5,4.9 C4.6,5.4 3.8,5.4 3.4,4.9 L.3,1.6 C-.3,.9 .1,0 1,0z" fill="#fff"/>
<path d="M421.1,500.1a3.0,3.0 0 0 1 3.0,-3.0H430.1c1.5,0 2.25,.75 3,1.5l3,3c.75,.75 1.5,1.5 3,1.5h9c1.5,0 2.25,-.75 3,-1.5l3,-3c.75,-.75 1.5,-1.5 3,-1.5H934.6a3.0,3.0 0 0 1 3.0,3.0V536.1a3.0,3.0 0 0 1 -3.0,3.0H457.1c-1.5,0 -2.25,.75 -3,1.5l-3,3c-.75,.75 -1.5,1.5 -3,1.5h-9c-1.5,0 -2.25,-.75 -3,-1.5l-3,-3c-.75,-.75 -1.5,-1.5 -3,-1.5H424.1a3.0,3.0 0 0 1 -3.0,-3.0z" fill="#9966FF" stroke="#774DCB" stroke-width="0.75"/>
<rect x="457.4" y="506.1" width="48.3" height="24" rx="3" fill="#9966FF" stroke="#774DCB" stroke-width="0.75"/>
<text x="465.7" y="523.1" class="t">LM</text>
<path transform="translate(488,516.6) scale(.92)" d="M1,0 H7.4 C8.3,0 8.7,.9 8.1,1.6 L5,4.9 C4.6,5.4 3.8,5.4 3.4,4.9 L.3,1.6 C-.3,.9 .1,0 1,0z" fill="#fff"/>
<rect x="520.4" y="506.1" width="72.3" height="24" rx="3" fill="#9966FF" stroke="#774DCB" stroke-width="0.75"/>
<text x="528.7" y="523.1" class="t">forward</text>
<path transform="translate(575,516.6) scale(.92)" d="M1,0 H7.4 C8.3,0 8.7,.9 8.1,1.6 L5,4.9 C4.6,5.4 3.8,5.4 3.4,4.9 L.3,1.6 C-.3,.9 .1,0 1,0z" fill="#fff"/>
<path d="M616.4,500.1H913.4a18,18 0 0 1 0,36H616.4a18,18 0 0 1 0,-36z" fill="#EC9C13" stroke="#CF8B17" stroke-width="0.75"/>
<path d="M616,503.1H715.6a15,15 0 0 1 0,30H616a15,15 0 0 1 0,-30z" fill="#855CD6" stroke="#774DCB" stroke-width="0.75"/>
<text x="610.6" y="523.3" class="t">Remote</text>
<rect x="658.4" y="506.1" width="63" height="24" rx="3" fill="#855CD6" stroke="#7a52cc" stroke-width="0.75"/>
<text x="666.7" y="523.1" class="t">Left Y</text>
<path transform="translate(703.7,516.6) scale(.92)" d="M1,0 H7.4 C8.3,0 8.7,.9 8.1,1.6 L5,4.9 C4.6,5.4 3.8,5.4 3.4,4.9 L.3,1.6 C-.3,.9 .1,0 1,0z" fill="#fff"/>
<rect x="744.9" y="506.1" width="39" height="24" rx="3" fill="#EC9C13" stroke="#d48d14" stroke-width="0.75"/>
<text x="753.2" y="523.1" class="t">+</text>
<path transform="translate(766.2,516.6) scale(.92)" d="M1,0 H7.4 C8.3,0 8.7,.9 8.1,1.6 L5,4.9 C4.6,5.4 3.8,5.4 3.4,4.9 L.3,1.6 C-.3,.9 .1,0 1,0z" fill="#fff"/>
<path d="M813.8,503.1H913.4a15,15 0 0 1 0,30H813.8a15,15 0 0 1 0,-30z" fill="#855CD6" stroke="#774DCB" stroke-width="0.75"/>
<text x="808.4" y="523.3" class="t">Remote</text>
<rect x="856.2" y="506.1" width="63" height="24" rx="3" fill="#855CD6" stroke="#7a52cc" stroke-width="0.75"/>
<text x="864.5" y="523.1" class="t">Left X</text>
<path transform="translate(901.5,516.6) scale(.92)" d="M1,0 H7.4 C8.3,0 8.7,.9 8.1,1.6 L5,4.9 C4.6,5.4 3.8,5.4 3.4,4.9 L.3,1.6 C-.3,.9 .1,0 1,0z" fill="#fff"/>
<path d="M421.1,542.1a3.0,3.0 0 0 1 3.0,-3.0H430.1c1.5,0 2.25,.75 3,1.5l3,3c.75,.75 1.5,1.5 3,1.5h9c1.5,0 2.25,-.75 3,-1.5l3,-3c.75,-.75 1.5,-1.5 3,-1.5H931.3a3.0,3.0 0 0 1 3.0,3.0V578.1a3.0,3.0 0 0 1 -3.0,3.0H457.1c-1.5,0 -2.25,.75 -3,1.5l-3,3c-.75,.75 -1.5,1.5 -3,1.5h-9c-1.5,0 -2.25,-.75 -3,-1.5l-3,-3c-.75,-.75 -1.5,-1.5 -3,-1.5H424.1a3.0,3.0 0 0 1 -3.0,-3.0z" fill="#9966FF" stroke="#774DCB" stroke-width="0.75"/>
<rect x="457.4" y="548.1" width="48.3" height="24" rx="3" fill="#9966FF" stroke="#774DCB" stroke-width="0.75"/>
<text x="465.7" y="565.1" class="t">LM</text>
<path transform="translate(488,558.6) scale(.92)" d="M1,0 H7.4 C8.3,0 8.7,.9 8.1,1.6 L5,4.9 C4.6,5.4 3.8,5.4 3.4,4.9 L.3,1.6 C-.3,.9 .1,0 1,0z" fill="#fff"/>
<rect x="520.4" y="548.1" width="72.3" height="24" rx="3" fill="#9966FF" stroke="#774DCB" stroke-width="0.75"/>
<text x="528.7" y="565.1" class="t">forward</text>
<path transform="translate(575,558.6) scale(.92)" d="M1,0 H7.4 C8.3,0 8.7,.9 8.1,1.6 L5,4.9 C4.6,5.4 3.8,5.4 3.4,4.9 L.3,1.6 C-.3,.9 .1,0 1,0z" fill="#fff"/>
<path d="M616.4,542.1H910.1a18,18 0 0 1 0,36H616.4a18,18 0 0 1 0,-36z" fill="#EC9C13" stroke="#CF8B17" stroke-width="0.75"/>
<path d="M616,545.1H715.6a15,15 0 0 1 0,30H616a15,15 0 0 1 0,-30z" fill="#855CD6" stroke="#774DCB" stroke-width="0.75"/>
<text x="610.6" y="565.3" class="t">Remote</text>
<rect x="658.4" y="548.1" width="63" height="24" rx="3" fill="#855CD6" stroke="#7a52cc" stroke-width="0.75"/>
<text x="666.7" y="565.1" class="t">Left Y</text>
<path transform="translate(703.7,558.6) scale(.92)" d="M1,0 H7.4 C8.3,0 8.7,.9 8.1,1.6 L5,4.9 C4.6,5.4 3.8,5.4 3.4,4.9 L.3,1.6 C-.3,.9 .1,0 1,0z" fill="#fff"/>
<rect x="744.9" y="548.1" width="35.7" height="24" rx="3" fill="#EC9C13" stroke="#d48d14" stroke-width="0.75"/>
<text x="753.2" y="565.1" class="t">-</text>
<path transform="translate(762.9,558.6) scale(.92)" d="M1,0 H7.4 C8.3,0 8.7,.9 8.1,1.6 L5,4.9 C4.6,5.4 3.8,5.4 3.4,4.9 L.3,1.6 C-.3,.9 .1,0 1,0z" fill="#fff"/>
<path d="M810.8,545.1H910.4a15,15 0 0 1 0,30H810.8a15,15 0 0 1 0,-30z" fill="#855CD6" stroke="#774DCB" stroke-width="0.75"/>
<text x="805.4" y="565.3" class="t">Remote</text>
<rect x="853.2" y="548.1" width="63" height="24" rx="3" fill="#855CD6" stroke="#7a52cc" stroke-width="0.75"/>
<text x="861.5" y="565.1" class="t">Left X</text>
<path transform="translate(898.5,558.6) scale(.92)" d="M1,0 H7.4 C8.3,0 8.7,.9 8.1,1.6 L5,4.9 C4.6,5.4 3.8,5.4 3.4,4.9 L.3,1.6 C-.3,.9 .1,0 1,0z" fill="#fff"/>
<path d="M421.1,584.1a3.0,3.0 0 0 1 3.0,-3.0H430.1c1.5,0 2.25,.75 3,1.5l3,3c.75,.75 1.5,1.5 3,1.5h9c1.5,0 2.25,-.75 3,-1.5l3,-3c.75,-.75 1.5,-1.5 3,-1.5H860.7a3.0,3.0 0 0 1 3.0,3.0V620.1a3.0,3.0 0 0 1 -3.0,3.0H457.1c-1.5,0 -2.25,.75 -3,1.5l-3,3c-.75,.75 -1.5,1.5 -3,1.5h-9c-1.5,0 -2.25,-.75 -3,-1.5l-3,-3c-.75,-.75 -1.5,-1.5 -3,-1.5H424.1a3.0,3.0 0 0 1 -3.0,-3.0z" fill="#4C97FF" stroke="#3373CC" stroke-width="0.75"/>
<text x="427.3" y="607.7" class="t">Serial</text>
<rect x="464" y="590.1" width="55" height="24" rx="3" fill="#4C97FF" stroke="#3373CC" stroke-width="0.75"/>
<text x="472.3" y="607.1" class="t">print</text>
<path transform="translate(501.3,600.6) scale(.92)" d="M1,0 H7.4 C8.3,0 8.7,.9 8.1,1.6 L5,4.9 C4.6,5.4 3.8,5.4 3.4,4.9 L.3,1.6 C-.3,.9 .1,0 1,0z" fill="#fff"/>
<path d="M543,584.1H839.8a18,18 0 0 1 0,36H543a18,18 0 0 1 0,-36z" fill="#EC9C13" stroke="#CF8B17" stroke-width="0.75"/>
<path d="M542.6,587.1H642.2a15,15 0 0 1 0,30H542.6a15,15 0 0 1 0,-30z" fill="#855CD6" stroke="#774DCB" stroke-width="0.75"/>
<text x="537.2" y="607.3" class="t">Remote</text>
<rect x="585" y="590.1" width="63" height="24" rx="3" fill="#855CD6" stroke="#7a52cc" stroke-width="0.75"/>
<text x="593.3" y="607.1" class="t">Left Y</text>
<path transform="translate(630.3,600.6) scale(.92)" d="M1,0 H7.4 C8.3,0 8.7,.9 8.1,1.6 L5,4.9 C4.6,5.4 3.8,5.4 3.4,4.9 L.3,1.6 C-.3,.9 .1,0 1,0z" fill="#fff"/>
<rect x="671.5" y="590.1" width="39" height="24" rx="3" fill="#EC9C13" stroke="#d48d14" stroke-width="0.75"/>
<text x="679.8" y="607.1" class="t">+</text>
<path transform="translate(692.8,600.6) scale(.92)" d="M1,0 H7.4 C8.3,0 8.7,.9 8.1,1.6 L5,4.9 C4.6,5.4 3.8,5.4 3.4,4.9 L.3,1.6 C-.3,.9 .1,0 1,0z" fill="#fff"/>
<path d="M740.4,587.1H840a15,15 0 0 1 0,30H740.4a15,15 0 0 1 0,-30z" fill="#855CD6" stroke="#774DCB" stroke-width="0.75"/>
<text x="735" y="607.3" class="t">Remote</text>
<rect x="782.8" y="590.1" width="63" height="24" rx="3" fill="#855CD6" stroke="#7a52cc" stroke-width="0.75"/>
<text x="791.1" y="607.1" class="t">Left X</text>
<path transform="translate(828.1,600.6) scale(.92)" d="M1,0 H7.4 C8.3,0 8.7,.9 8.1,1.6 L5,4.9 C4.6,5.4 3.8,5.4 3.4,4.9 L.3,1.6 C-.3,.9 .1,0 1,0z" fill="#fff"/>
<path d="M421.1,626.1a3.0,3.0 0 0 1 3.0,-3.0H430.1c1.5,0 2.25,.75 3,1.5l3,3c.75,.75 1.5,1.5 3,1.5h9c1.5,0 2.25,-.75 3,-1.5l3,-3c.75,-.75 1.5,-1.5 3,-1.5H585.6a3.0,3.0 0 0 1 3.0,3.0V656.1a3.0,3.0 0 0 1 -3.0,3.0H457.1c-1.5,0 -2.25,.75 -3,1.5l-3,3c-.75,.75 -1.5,1.5 -3,1.5h-9c-1.5,0 -2.25,-.75 -3,-1.5l-3,-3c-.75,-.75 -1.5,-1.5 -3,-1.5H424.1a3.0,3.0 0 0 1 -3.0,-3.0z" fill="#4C97FF" stroke="#3373CC" stroke-width="0.75"/>
<text x="427.3" y="646.7" class="t">Serial</text>
<rect x="464" y="629.1" width="55" height="24" rx="3" fill="#4C97FF" stroke="#3373CC" stroke-width="0.75"/>
<text x="472.3" y="646.1" class="t">print</text>
<path transform="translate(501.3,639.6) scale(.92)" d="M1,0 H7.4 C8.3,0 8.7,.9 8.1,1.6 L5,4.9 C4.6,5.4 3.8,5.4 3.4,4.9 L.3,1.6 C-.3,.9 .1,0 1,0z" fill="#fff"/>
<path d="M537.3,629.1H570.4a12,12 0 0 1 0,24H537.3a12,12 0 0 1 0,-24z" fill="#fff" stroke="#3373CC" stroke-width="0.75"/>
<text x="533.6" y="646.1" fill="#575e75">&lt;===&gt;</text>
<path d="M421.1,662.1a3.0,3.0 0 0 1 3.0,-3.0H430.1c1.5,0 2.25,.75 3,1.5l3,3c.75,.75 1.5,1.5 3,1.5h9c1.5,0 2.25,-.75 3,-1.5l3,-3c.75,-.75 1.5,-1.5 3,-1.5H867.1a3.0,3.0 0 0 1 3.0,3.0V698.1a3.0,3.0 0 0 1 -3.0,3.0H457.1c-1.5,0 -2.25,.75 -3,1.5l-3,3c-.75,.75 -1.5,1.5 -3,1.5h-9c-1.5,0 -2.25,-.75 -3,-1.5l-3,-3c-.75,-.75 -1.5,-1.5 -3,-1.5H424.1a3.0,3.0 0 0 1 -3.0,-3.0z" fill="#4C97FF" stroke="#3373CC" stroke-width="0.75"/>
<text x="427.3" y="685.7" class="t">Serial</text>
<rect x="464" y="668.1" width="64.5" height="24" rx="3" fill="#4C97FF" stroke="#3373CC" stroke-width="0.75"/>
<text x="472.3" y="685.1" class="t">println</text>
<path transform="translate(510.8,678.6) scale(.92)" d="M1,0 H7.4 C8.3,0 8.7,.9 8.1,1.6 L5,4.9 C4.6,5.4 3.8,5.4 3.4,4.9 L.3,1.6 C-.3,.9 .1,0 1,0z" fill="#fff"/>
<path d="M552.3,662.1H845.9a18,18 0 0 1 0,36H552.3a18,18 0 0 1 0,-36z" fill="#EC9C13" stroke="#CF8B17" stroke-width="0.75"/>
<path d="M551.9,665.1H651.5a15,15 0 0 1 0,30H551.9a15,15 0 0 1 0,-30z" fill="#855CD6" stroke="#774DCB" stroke-width="0.75"/>
<text x="546.5" y="685.3" class="t">Remote</text>
<rect x="594.3" y="668.1" width="63" height="24" rx="3" fill="#855CD6" stroke="#7a52cc" stroke-width="0.75"/>
<text x="602.6" y="685.1" class="t">Left Y</text>
<path transform="translate(639.6,678.6) scale(.92)" d="M1,0 H7.4 C8.3,0 8.7,.9 8.1,1.6 L5,4.9 C4.6,5.4 3.8,5.4 3.4,4.9 L.3,1.6 C-.3,.9 .1,0 1,0z" fill="#fff"/>
<rect x="680.8" y="668.1" width="35.7" height="24" rx="3" fill="#EC9C13" stroke="#d48d14" stroke-width="0.75"/>
<text x="689.1" y="685.1" class="t">-</text>
<path transform="translate(698.8,678.6) scale(.92)" d="M1,0 H7.4 C8.3,0 8.7,.9 8.1,1.6 L5,4.9 C4.6,5.4 3.8,5.4 3.4,4.9 L.3,1.6 C-.3,.9 .1,0 1,0z" fill="#fff"/>
<path d="M746.7,665.1H846.3a15,15 0 0 1 0,30H746.7a15,15 0 0 1 0,-30z" fill="#855CD6" stroke="#774DCB" stroke-width="0.75"/>
<text x="741.3" y="685.3" class="t">Remote</text>
<rect x="789.1" y="668.1" width="63" height="24" rx="3" fill="#855CD6" stroke="#7a52cc" stroke-width="0.75"/>
<text x="797.4" y="685.1" class="t">Left X</text>
<path transform="translate(834.4,678.6) scale(.92)" d="M1,0 H7.4 C8.3,0 8.7,.9 8.1,1.6 L5,4.9 C4.6,5.4 3.8,5.4 3.4,4.9 L.3,1.6 C-.3,.9 .1,0 1,0z" fill="#fff"/></svg>
</div>
<svg id="chrome" style="position:absolute;left:680px;top:0px" width="729" height="496" viewBox="680 0 729 496" font-family="'Liberation Sans',sans-serif">
<defs>
 <filter id="csh" x="-8%" y="-10%" width="116%" height="125%"><feGaussianBlur color-interpolation-filters="sRGB" stdDeviation="8"/></filter>
</defs>
<rect x="712" y="10" width="697" height="456" fill="#000" opacity="0.24" filter="url(#csh)"/>
<rect x="716" y="8" width="689" height="449" fill="#1883d7"/>
<rect x="717" y="9" width="687" height="447" fill="#cccccc"/>
<rect x="717" y="55.5" width="687" height="37" fill="#f2f2f2"/>
<path d="M717,55.5 H1404" stroke="#a6a6a6" stroke-width="1"/>
<path d="M722.2,56 L734.8,29 Q735.5,27.5 737.2,27.5 H913.4 Q915.1,27.5 915.8,29 L928.6,56 Z" fill="#f2f2f2" stroke="#a0a0a0" stroke-width="1"/>
<rect x="723" y="55" width="205" height="2.5" fill="#f2f2f2"/>
<path d="M927.5,35 H952 C953.5,35 954.3,35.6 955,37 L959.5,48 C960,49.5 959.5,50.5 958,50.5 H935 C933.5,50.5 932.7,50 932,48.5 L927,37.5 C926.3,36 926.5,35 927.5,35Z" fill="#d2d2d2" stroke="#a2a2a2" stroke-width="1"/>
<!-- page icon -->
<path d="M740.5,35.5 H746.5 L749.5,38.5 V48.5 H740.5Z M746.5,35.5 V38.5 H749.5" fill="none" stroke="#5a5a5a" stroke-width="1.1" stroke-linejoin="round"/>
<text x="760" y="45.8" font-size="12" fill="#111" letter-spacing="0.28">192.168.0.144/joy</text>
<path d="M902.5,38.5 L909.5,45.5 M909.5,38.5 L902.5,45.5" stroke="#2e2e2e" stroke-width="1.6"/>
<!-- window controls -->
<rect x="1227" y="16" width="33" height="22" fill="#fff"/>
<path d="M1284,23.5 H1294" stroke="#000" stroke-width="1"/>
<rect x="1330.5" y="18.5" width="9" height="9" fill="none" stroke="#000" stroke-width="1"/>
<path d="M1375.8,17.8 L1386,28 M1386,17.8 L1375.8,28" stroke="#000" stroke-width="1.1"/>
<!-- nav buttons -->
<path d="M741.5,73.8 H729.5 M735.3,67.5 L729,73.8 L735.3,80.1" fill="none" stroke="#5a5a5a" stroke-width="1.9"/>
<path d="M756.5,73.8 H768.5 M762.7,67.5 L769,73.8 L762.7,80.1" fill="none" stroke="#c6c6c6" stroke-width="1.9"/>
<path d="M796.2,70.5 A6,6 0 1 0 797,76" fill="none" stroke="#5a5a5a" stroke-width="1.9"/>
<path d="M797.8,66.5 V72.2 H792.1Z" fill="#5a5a5a"/>
<!-- omnibox -->
<rect x="809.5" y="60.5" width="466" height="27.5" rx="2" fill="#fff" stroke="#b4b4b4" stroke-width="1"/>
<circle cx="822.5" cy="73.8" r="6.2" fill="none" stroke="#5a5a5a" stroke-width="1.4"/>
<path d="M822.5,72.8 V77.2" stroke="#5a5a5a" stroke-width="1.6"/><circle cx="822.5" cy="70.5" r="0.95" fill="#5a5a5a"/>
<text x="836.6" y="79" font-size="14.6" fill="#111" letter-spacing="0.05">192.168.0.144<tspan fill="#777">/joy</tspan></text>
<path d="M1262,67 L1263.9,71.6 L1268.8,72 L1265.1,75.2 L1266.2,80 L1262,77.4 L1257.8,80 L1258.9,75.2 L1255.2,72 L1260.1,71.6Z" fill="none" stroke="#4a4a4a" stroke-width="1.3" stroke-linejoin="round"/>
<!-- extension icons -->
<rect x="1284" y="66" width="16" height="16" rx="1.5" fill="#c8c8c8"/>
<path d="M1287.5,78.5 C1290,76 1292,72 1291.5,69.5 C1291,72.5 1293.5,75.5 1297,76 C1293,75.5 1290,76.5 1287.5,78.5Z" fill="none" stroke="#fff" stroke-width="0.9"/>
<path d="M1320.7,65.8 H1327.5 L1332.2,70.5 V77.1 L1327.5,81.8 H1320.7 L1316,77.1 V70.5Z" fill="#d40808"/>
<text x="1324" y="76.6" text-anchor="middle" font-size="7.4" font-weight="bold" fill="#fff" letter-spacing="-0.35">ABP</text>
<path d="M1355,66.5 H1363 V81.5 H1355Z" fill="#b48ad6" stroke="#7a3fa8" stroke-width="0.8"/>
<path d="M1359,69 H1363 M1359,72.7 H1363 M1359,76.4 H1363" stroke="#7a3fa8" stroke-width="0.8"/>
<path d="M1347.5,67.5 L1357.5,66 V82 L1347.5,80.5Z" fill="#7a2fb0"/>
<text x="1352.4" y="77.2" text-anchor="middle" font-size="8.5" font-weight="bold" fill="#fff">N</text>
<circle cx="1386.5" cy="69.4" r="1.55" fill="#5a5a5a"/><circle cx="1386.5" cy="74.4" r="1.55" fill="#5a5a5a"/><circle cx="1386.5" cy="79.4" r="1.55" fill="#5a5a5a"/>
<!-- page content -->
<rect x="717" y="92.5" width="687" height="363.5" fill="#000"/>
<path d="M717,92.5 H1404" stroke="#b0b0b0" stroke-width="0.8"/>
<text x="1058.6" y="110" text-anchor="middle" fill="#0000ff" font-size="16.6" letter-spacing="0.25">Virtual Joystick</text>
<text x="1059.2" y="130.5" text-anchor="middle" fill="#ff0000" font-size="15.6" letter-spacing="1.93">95&lt;===&gt;177</text>
<text x="1059.2" y="151.5" text-anchor="middle" fill="#ff0000" font-size="15.6" letter-spacing="1.93">95&lt;===&gt;177</text>
<text x="1059.2" y="172.5" text-anchor="middle" fill="#ff0000" font-size="15.6" letter-spacing="1.93">95&lt;===&gt;177</text>
<text x="1059.2" y="193.5" text-anchor="middle" fill="#ff0000" font-size="15.6" letter-spacing="1.93">95&lt;===&gt;177</text>
<text x="1059.2" y="214.5" text-anchor="middle" fill="#ff0000" font-size="15.6" letter-spacing="1.93">95&lt;===&gt;177</text>
<text x="1059.2" y="235.5" text-anchor="middle" fill="#ff0000" font-size="15.6" letter-spacing="1.93">95&lt;===&gt;177</text>
<text x="1059.2" y="256.5" text-anchor="middle" fill="#ff0000" font-size="15.6" letter-spacing="1.93">95&lt;===&gt;177</text>
<text x="1059.2" y="277.5" text-anchor="middle" fill="#ff0000" font-size="15.6" letter-spacing="1.93">95&lt;===&gt;177</text>
<text x="1059.2" y="298.5" text-anchor="middle" fill="#ff0000" font-size="15.6" letter-spacing="1.93">95&lt;===&gt;177</text>
<text x="1061.8" y="319.5" text-anchor="middle" fill="#ff0000" font-size="15.6" letter-spacing="1.93">95&lt;===</text>
<circle cx="842" cy="249" r="40" fill="none" stroke="#00ffff" stroke-width="6"/>
<circle cx="854" cy="289" r="40" fill="none" stroke="#00ffff" stroke-width="6"/>
<circle cx="854.2" cy="289.2" r="60" fill="none" stroke="#00ffff" stroke-width="2"/>
</svg>
</body></html>
